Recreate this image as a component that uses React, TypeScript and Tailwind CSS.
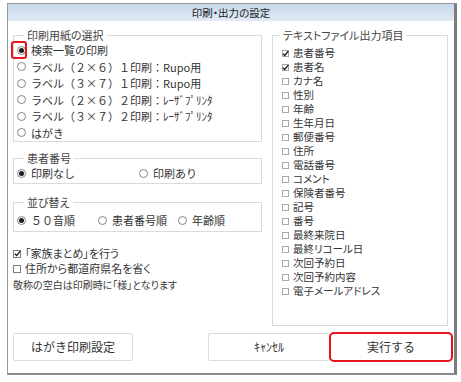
import React from "react";

function Radio({ checked }: { checked?: boolean }) {
  return (
    <span className="flex h-[9px] w-[9px] shrink-0 items-center justify-center rounded-full border border-[#858585] bg-white">
      {checked && <span className="h-[5px] w-[5px] rounded-full bg-[#1c1c1c]" />}
    </span>
  );
}

function CheckBox({ checked, light }: { checked?: boolean; light?: boolean }) {
  return (
    <span
      className={`flex shrink-0 items-center justify-center border bg-white ${
        light ? "h-[7px] w-[7px] border-[#a8a8a8]" : "h-[8px] w-[8px] border-[#7e7e7e]"
      }`}
    >
      {checked && (
        <svg viewBox="0 0 8 8" className="h-[7px] w-[7px] overflow-visible">
          <path d="M1 4.2 L3.1 6.3 L7.2 1.2" stroke="#1c1c1c" strokeWidth="1.5" fill="none" />
        </svg>
      )}
    </span>
  );
}

function RadioItem({ label, checked, className = "" }: { label: string; checked?: boolean; className?: string }) {
  return (
    <div className={`flex items-center gap-[5px] ${className}`}>
      <Radio checked={checked} />
      <span className="whitespace-nowrap">{label}</span>
    </div>
  );
}

const paperOptions = [
  "ラベル（２×６）１印刷：Rupo用",
  "ラベル（３×７）１印刷：Rupo用",
  "ラベル（２×６）２印刷：ﾚｰｻﾞﾌﾟﾘﾝﾀ",
  "ラベル（３×７）２印刷：ﾚｰｻﾞﾌﾟﾘﾝﾀ",
  "はがき",
];

const textItems: { label: string; checked?: boolean }[] = [
  { label: "患者番号", checked: true },
  { label: "患者名", checked: true },
  { label: "カナ名" },
  { label: "性別" },
  { label: "年齢" },
  { label: "生年月日" },
  { label: "郵便番号" },
  { label: "住所" },
  { label: "電話番号" },
  { label: "コメント" },
  { label: "保険者番号" },
  { label: "記号" },
  { label: "番号" },
  { label: "最終来院日" },
  { label: "最終リコール日" },
  { label: "次回予約日" },
  { label: "次回予約内容" },
  { label: "電子メールアドレス" },
];

export default function App() {
  return (
    <div className="h-[382px] w-[461px] overflow-hidden bg-white pt-[3px] pl-[7px] font-['Noto_Sans_CJK_JP','Noto_Sans',sans-serif] text-[11px] text-[#333]">
      <div className="flex h-[372px] w-[450px] flex-col border border-r-[3px] border-b-[2px] border-[#9a9a9a] border-r-[#7d7d7d] border-b-[#8a8a8a] bg-white">
        {/* title bar */}
        <div className="flex h-[17px] shrink-0 items-center justify-center bg-gradient-to-b from-[#c7d8eb] to-[#e1eaf5] text-[10.5px] leading-[17px] text-[#222] [font-feature-settings:'palt']">
          印刷・出力の設定
        </div>

        {/* body */}
        <div className="flex flex-1 flex-col pt-[7px] pl-[5px] pr-[6px]">
          <div className="flex h-[298px] gap-[10px]">
            {/* left column */}
            <div className="flex w-[249px] shrink-0 flex-col">
              <fieldset className="min-w-0 border border-[#dadada] p-0">
                <legend className="ml-[10px] px-[3px] text-[11px] leading-[14px] text-[#444] [font-feature-settings:'palt']">
                  印刷用紙の選択
                </legend>
                <div className="flex flex-col pl-[3px]">
                  <div className="flex h-[16.5px] items-center gap-[5px]">
                    <span className="relative flex">
                      <Radio checked />
                      <span className="absolute top-[-5px] left-[-6px] h-[18px] w-[16px] rounded-[3px] border-2 border-[#e8141c]" />
                    </span>
                    <span className="whitespace-nowrap">検索一覧の印刷</span>
                  </div>
                  {paperOptions.map((o) => (
                    <RadioItem key={o} label={o} className="h-[16.5px]" />
                  ))}
                </div>
              </fieldset>

              <fieldset className="mt-[9px] min-w-0 border border-[#dadada] p-0">
                <legend className="ml-[10px] px-[3px] text-[11px] leading-[14px] text-[#444]">患者番号</legend>
                <div className="flex h-[16px] items-center pl-[3px]">
                  <RadioItem label="印刷なし" checked className="w-[122px]" />
                  <RadioItem label="印刷あり" />
                </div>
                <div className="h-[2px]" />
              </fieldset>

              <fieldset className="mt-[11px] min-w-0 border border-[#dadada] p-0">
                <legend className="ml-[10px] px-[3px] text-[11px] leading-[14px] text-[#444] [font-feature-settings:'palt']">
                  並び替え
                </legend>
                <div className="mt-[3px] flex h-[16px] items-center pl-[3px]">
                  <RadioItem label="５０音順" checked className="w-[81px]" />
                  <RadioItem label="患者番号順" className="w-[80px]" />
                  <RadioItem label="年齢順" />
                </div>
                <div className="h-[3px]" />
              </fieldset>

              <div className="mt-[14px] flex flex-col [font-feature-settings:'palt']">
                <div className="flex h-[15px] items-center gap-[4px]">
                  <CheckBox checked />
                  <span>「家族まとめ」を行う</span>
                </div>
                <div className="flex h-[15px] items-center gap-[4px]">
                  <CheckBox />
                  <span>住所から都道府県名を省く</span>
                </div>
                <div className="flex h-[17px] items-center text-[10px] text-[#3a3a3a]">
                  敬称の空白は印刷時に「様」となります
                </div>
              </div>
            </div>

            {/* right column */}
            <fieldset className="h-full w-[176px] min-w-0 shrink-0 border border-[#dadada] p-0 [font-feature-settings:'palt']">
              <legend className="ml-[7px] px-[3px] text-[11px] leading-[14px] text-[#444]">
                テキストファイル出力項目
              </legend>
              <div className="flex flex-col pt-[4px] pl-[9px]">
                {textItems.map((t) => (
                  <div key={t.label} className="flex h-[14px] items-center gap-[4px] overflow-visible">
                    <CheckBox checked={t.checked} light />
                    <span className="whitespace-nowrap text-[10.5px] leading-[14px]">{t.label}</span>
                  </div>
                ))}
              </div>
            </fieldset>
          </div>

          {/* buttons */}
          <div className="mt-[7px] flex h-[28px] text-[12px] text-[#333]">
            <button className="flex h-[28px] w-[120px] shrink-0 items-center justify-center rounded-[2px] border border-[#dcdcdc] bg-white">
              はがき印刷設定
            </button>
            <button className="ml-[75px] flex h-[28px] w-[122px] shrink-0 items-center justify-center rounded-[2px] border border-[#dcdcdc] bg-white">
              ｷｬﾝｾﾙ
            </button>
            <div className="-mt-[1px] -ml-[1px] flex h-[30px] w-[124px] shrink-0 items-center justify-center rounded-[5px] border-2 border-[#e8141c] bg-white">
              <span>実行する</span>
            </div>
          </div>
        </div>
      </div>
    </div>
  );
}
